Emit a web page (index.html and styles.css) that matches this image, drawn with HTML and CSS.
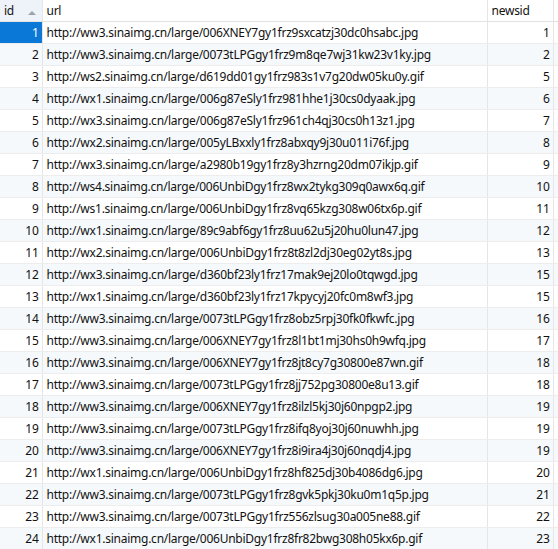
FILE: index.html
```html
<!DOCTYPE html>
<html>
<head>
<meta charset="utf-8">
<link rel="stylesheet" href="styles.css">
</head>
<body>
<table class="grid">
<colgroup><col class="c-id"><col class="c-url"><col class="c-news"><col class="c-pad"></colgroup>
<thead>
<tr><th class="h-id"><span>id</span><span class="sort"></span></th><th>url</th><th>newsid</th><th></th></tr>
</thead>
<tbody>
<tr><td class="num sel">1</td><td>http://ww3.sinaimg.cn/large/006XNEY7gy1frz9sxcatzj30dc0hsabc.jpg</td><td class="num">1</td><td></td></tr>
<tr><td class="num">2</td><td>http://ww3.sinaimg.cn/large/0073tLPGgy1frz9m8qe7wj31kw23v1ky.jpg</td><td class="num">2</td><td></td></tr>
<tr><td class="num">3</td><td>http://ws2.sinaimg.cn/large/d619dd01gy1frz983s1v7g20dw05ku0y.gif</td><td class="num">5</td><td></td></tr>
<tr><td class="num">4</td><td>http://wx1.sinaimg.cn/large/006g87eSly1frz981hhe1j30cs0dyaak.jpg</td><td class="num">6</td><td></td></tr>
<tr><td class="num">5</td><td>http://wx3.sinaimg.cn/large/006g87eSly1frz961ch4qj30cs0h13z1.jpg</td><td class="num">7</td><td></td></tr>
<tr><td class="num">6</td><td>http://wx2.sinaimg.cn/large/005yLBxxly1frz8abxqy9j30u011i76f.jpg</td><td class="num">8</td><td></td></tr>
<tr><td class="num">7</td><td>http://wx3.sinaimg.cn/large/a2980b19gy1frz8y3hzrng20dm07ikjp.gif</td><td class="num">9</td><td></td></tr>
<tr><td class="num">8</td><td>http://ws4.sinaimg.cn/large/006UnbiDgy1frz8wx2tykg309q0awx6q.gif</td><td class="num">10</td><td></td></tr>
<tr><td class="num">9</td><td>http://ws1.sinaimg.cn/large/006UnbiDgy1frz8vq65kzg308w06tx6p.gif</td><td class="num">11</td><td></td></tr>
<tr><td class="num">10</td><td>http://wx1.sinaimg.cn/large/89c9abf6gy1frz8uu62u5j20hu0lun47.jpg</td><td class="num">12</td><td></td></tr>
<tr><td class="num">11</td><td>http://wx2.sinaimg.cn/large/006UnbiDgy1frz8t8zl2dj30eg02yt8s.jpg</td><td class="num">13</td><td></td></tr>
<tr><td class="num">12</td><td>http://wx3.sinaimg.cn/large/d360bf23ly1frz17mak9ej20lo0tqwgd.jpg</td><td class="num">15</td><td></td></tr>
<tr><td class="num">13</td><td>http://wx1.sinaimg.cn/large/d360bf23ly1frz17kpycyj20fc0m8wf3.jpg</td><td class="num">15</td><td></td></tr>
<tr><td class="num">14</td><td>http://ww3.sinaimg.cn/large/0073tLPGgy1frz8obz5rpj30fk0fkwfc.jpg</td><td class="num">16</td><td></td></tr>
<tr><td class="num">15</td><td>http://ww3.sinaimg.cn/large/006XNEY7gy1frz8l1bt1mj30hs0h9wfq.jpg</td><td class="num">17</td><td></td></tr>
<tr><td class="num">16</td><td>http://ww3.sinaimg.cn/large/006XNEY7gy1frz8jt8cy7g30800e87wn.gif</td><td class="num">18</td><td></td></tr>
<tr><td class="num">17</td><td>http://ww3.sinaimg.cn/large/0073tLPGgy1frz8jj752pg30800e8u13.gif</td><td class="num">18</td><td></td></tr>
<tr><td class="num">18</td><td>http://ww3.sinaimg.cn/large/006XNEY7gy1frz8ilzl5kj30j60npgp2.jpg</td><td class="num">19</td><td></td></tr>
<tr><td class="num">19</td><td>http://ww3.sinaimg.cn/large/0073tLPGgy1frz8ifq8yoj30j60nuwhh.jpg</td><td class="num">19</td><td></td></tr>
<tr><td class="num">20</td><td>http://ww3.sinaimg.cn/large/006XNEY7gy1frz8i9ira4j30j60nqdj4.jpg</td><td class="num">19</td><td></td></tr>
<tr><td class="num">21</td><td>http://wx1.sinaimg.cn/large/006UnbiDgy1frz8hf825dj30b4086dg6.jpg</td><td class="num">20</td><td></td></tr>
<tr><td class="num">22</td><td>http://ww3.sinaimg.cn/large/0073tLPGgy1frz8gvk5pkj30ku0m1q5p.jpg</td><td class="num">21</td><td></td></tr>
<tr><td class="num">23</td><td>http://ww3.sinaimg.cn/large/0073tLPGgy1frz556zlsug30a005ne88.gif</td><td class="num">22</td><td></td></tr>
<tr><td class="num">24</td><td>http://wx1.sinaimg.cn/large/006UnbiDgy1frz8fr82bwg308h05kx6p.gif</td><td class="num">23</td><td></td></tr>
</tbody>
</table>
</body>
</html>
```
FILE: styles.css
```css
html, body {
  margin: 0;
  padding: 0;
  background: #ffffff;
  overflow: hidden;
}
.grid {
  border-collapse: collapse;
  table-layout: fixed;
  width: 558px;
  font-family: "Noto Sans", "Liberation Sans", sans-serif;
  font-size: 12px;
  letter-spacing: -0.25px;
  color: #111;
}
.c-id { width: 42px; }
.c-url { width: 445px; }
.c-news { width: 66px; }
.c-pad { width: 5px; }
.grid th, .grid td {
  height: 21px;
  padding: 0 3px 0 4px;
  border-right: 1px solid #e6e6e6;
  border-bottom: 1px solid #ededed;
  white-space: nowrap;
  overflow: hidden;
  text-align: left;
  font-weight: normal;
  line-height: 21px;
}
.grid th {
  border-bottom: 1px solid #e2e2e2;
  background: #ffffff;
}
.grid th:last-child, .grid td:last-child {
  border-right: none;
}
.grid th.h-id {
  background: #eef3f9;
  position: relative;
}
.sort {
  position: absolute;
  left: 28px;
  top: 11px;
  width: 0;
  height: 0;
  border-left: 4px solid transparent;
  border-right: 4px solid transparent;
  border-bottom: 4px solid #9aa3ad;
}
.grid td.num {
  text-align: right;
}
.grid tbody tr:nth-child(even) td {
  background: #f6f9fc;
}
.grid td.sel {
  background: #0a78d7 !important;
  color: #ffffff;
}
```
